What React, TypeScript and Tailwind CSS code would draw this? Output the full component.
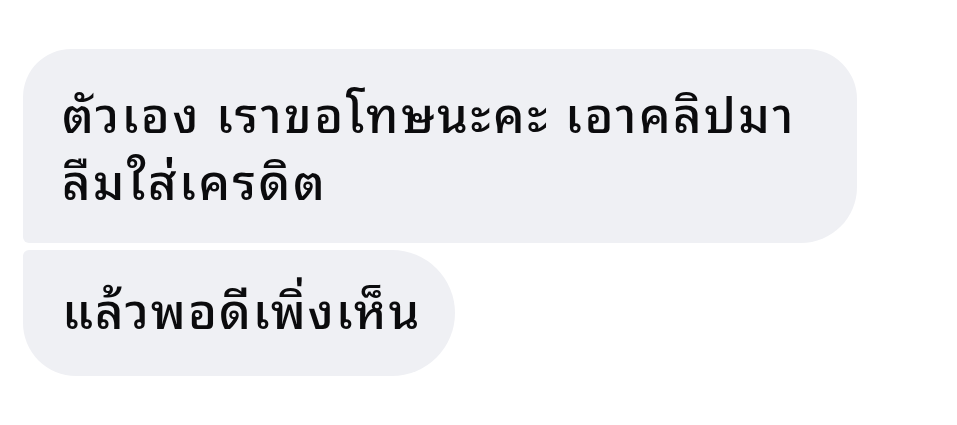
export default function App() {
  return (
    <div className="w-[957px] h-[425px] bg-white pl-[23px] pt-[49px] flex flex-col items-start gap-[7px] font-['Noto_Sans_Thai_Looped','Noto_Sans_Thai','Noto_Sans',sans-serif] font-medium text-[#0b0b0d]">
      <div className="w-[834px] h-[194px] bg-[#eff0f4] rounded-tl-[48px] rounded-tr-[50px] rounded-br-[56px] rounded-bl-[6px] pl-[39px] pt-[29px] text-[49px] leading-[67px] tracking-[2.5px]">
        ตัวเอง เราขอโทษนะคะ เอาคลิปมา
        <br />
        ลืมใส่เครดิต
      </div>
      <div className="w-[432px] h-[126px] bg-[#eff0f4] rounded-tl-[6px] rounded-tr-[63px] rounded-br-[63px] rounded-bl-[53px] pl-[39px] pt-[24px] text-[49px] leading-[67px] tracking-[2px]">
        แล้วพอดีเพิ่งเห็น
      </div>
    </div>
  );
}
